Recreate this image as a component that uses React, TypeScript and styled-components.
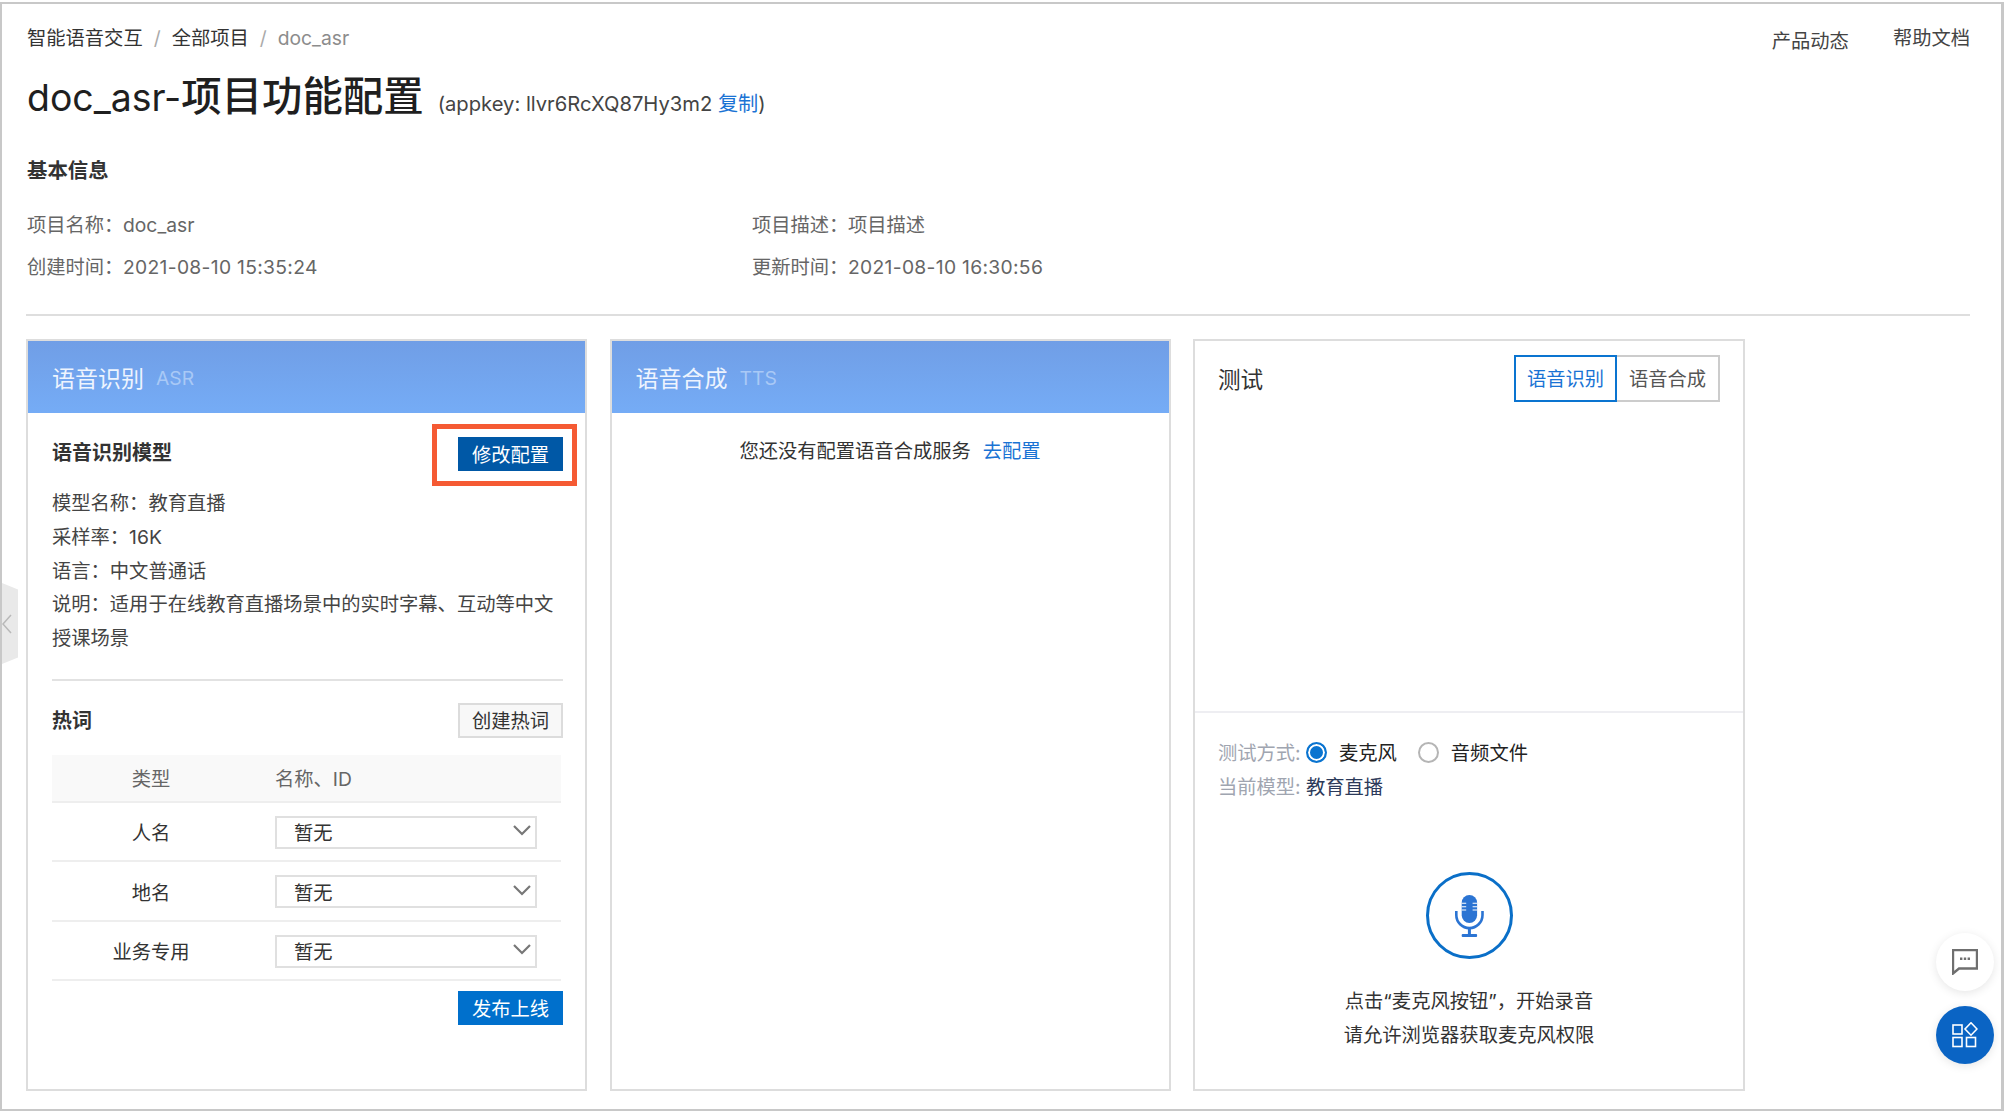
import React from "react";
import styled, { createGlobalStyle } from "styled-components";

const Global = createGlobalStyle`
  html, body { margin: 0; padding: 0; background: #fff; }
  body {
    font-family: "Inter", "Noto Sans CJK SC", sans-serif;
    font-size: 19.3px;
    color: #333;
  }
  * { box-sizing: border-box; }
`;

const Frame = styled.div`
  position: relative;
  width: 2004px;
  height: 1109px;
  margin-top: 2px;
  border: 2px solid #c8c8c8;
  border-right-width: 3px;
  padding: 20px 31px 0 24px;
  overflow: hidden;
`;
const Header = styled.header`
  padding-left: 1px;
`;
const TopRow = styled.div`
  display: flex;
  justify-content: space-between;
  align-items: flex-start;
  height: 28px;
  line-height: 28px;
`;
const Crumbs = styled.div`
  display: flex;
  gap: 11px;
`;
const Crumb = styled.span<{ $muted?: boolean }>`
  color: ${(p) => (p.$muted ? "#8c8c8c" : "#333")};
`;
const Sep = styled.span`
  color: #aaa;
`;
const TopLinks = styled.div`
  display: flex;
  gap: 44px;
`;
const TopLink = styled.span<{ $drop?: number }>`
  color: #444;
  margin-top: ${(p) => p.$drop ?? 0}px;
`;
const TitleRow = styled.div`
  display: flex;
  align-items: baseline;
  margin-top: 17px;
  height: 56px;
  line-height: 56px;
`;
const PageTitle = styled.h1`
  margin: 0;
  font-size: 40.4px;
  font-weight: 500;
  color: #1f1f1f;
`;
const TitleLatin = styled.span`
  font-size: 37.4px;
  font-weight: 400;
`;
const AppKey = styled.span`
  margin-left: 14px;
  font-size: 20.2px;
  color: #444;
`;
const Link = styled.span`
  color: #1a73d4;
`;
const SectionTitle = styled.div`
  margin-top: 32px;
  font-size: 20.4px;
  font-weight: 700;
  line-height: 28px;
  color: #333;
`;
const InfoGrid = styled.div`
  display: grid;
  grid-template-columns: 725px 1fr;
  grid-auto-rows: 42px;
  margin-top: 19px;
  align-items: center;
  color: #666;
  line-height: 26px;
`;
const InfoItem = styled.div`
  display: flex;
  align-items: baseline;
`;
const InfoLabel = styled.span`
  flex: none;
  width: 96px;
  white-space: nowrap;
`;
const DateText = styled.span`
  letter-spacing: 0.3px;
`;
const Divider = styled.div`
  height: 2px;
  margin-top: 26px;
  background: #dedede;
`;
const Panels = styled.div`
  display: flex;
  gap: 22.5px;
  margin-top: 23px;
`;
const Panel = styled.section<{ $w: number }>`
  width: ${(p) => p.$w}px;
  height: 752px;
  border: 2px solid #dddddd;
  display: flex;
  flex-direction: column;
  flex: none;
`;
const PanelHead = styled.div`
  height: 72px;
  padding: 0 24px;
  display: flex;
  align-items: center;
  gap: 12px;
  background: linear-gradient(180deg, #709ee6 0%, #75acf6 100%);
`;
const HeadTitle = styled.span`
  font-size: 23px;
  color: #eef4fe;
`;
const HeadSub = styled.span`
  font-size: 19.3px;
  color: #a9c9f6;
  margin-top: 2px;
`;
const PanelBody = styled.div`
  padding: 0 22px 0 24px;
  display: flex;
  flex-direction: column;
`;
const SplitRow = styled.div<{ $top: number }>`
  display: flex;
  justify-content: space-between;
  align-items: center;
  margin-top: ${(p) => p.$top}px;
`;
const SubTitle = styled.div<{ $lift: number }>`
  font-size: 20px;
  font-weight: 700;
  color: #333;
  margin-bottom: ${(p) => p.$lift}px;
`;
const HighlightWrap = styled.div`
  position: relative;
  display: flex;
`;
const Highlight = styled.div`
  position: absolute;
  left: -26px;
  right: -14px;
  top: -13px;
  bottom: -15px;
  border: 5px solid #f55a33;
`;
const Button = styled.button<{ $variant: "dark" | "primary" | "ghost" }>`
  width: 105px;
  height: ${(p) => (p.$variant === "ghost" ? 35 : 34)}px;
  padding: 0;
  font: inherit;
  border: ${(p) => (p.$variant === "ghost" ? "2px solid #dcdcdc" : "none")};
  background: ${(p) =>
    p.$variant === "dark" ? "#0058a6" : p.$variant === "primary" ? "#0070cc" : "#f8f8f8"};
  color: ${(p) => (p.$variant === "ghost" ? "#333" : "#fff")};
`;
const Lines = styled.div`
  margin-top: 16px;
  line-height: 33.8px;
  color: #444;
`;
const SoftRule = styled.div`
  height: 2px;
  margin-top: 23px;
  background: #e2e2e2;
`;
const HotTable = styled.div`
  margin: 17px 2px 0 0;
`;
const HotHead = styled.div`
  display: grid;
  grid-template-columns: 198px 1fr;
  align-items: center;
  height: 48px;
  padding-top: 1px;
  background: #f9f9f9;
  border-bottom: 2px solid #eeeeee;
  color: #666;
`;
const HotRow = styled.div`
  display: grid;
  grid-template-columns: 198px 1fr;
  align-items: center;
  height: 59.5px;
  padding-top: 1px;
  border-bottom: 2px solid #eeeeee;
  color: #333;
`;
const TypeCell = styled.div`
  text-align: center;
`;
const NameCell = styled.div`
  padding-left: 25px;
`;
const SelectBox = styled.div`
  width: 262px;
  height: 33px;
  border: 2px solid #e0e0e0;
  padding: 0 4px 0 17px;
  display: flex;
  align-items: center;
  justify-content: space-between;
`;
const ChevronBox = styled.span`
  display: flex;
  margin-bottom: 3px;
`;
const Publish = styled.div`
  display: flex;
  justify-content: flex-end;
  margin-top: 10px;
`;
const EmptyNote = styled.div`
  margin-top: 24px;
  height: 28px;
  line-height: 28px;
  display: flex;
  justify-content: center;
  gap: 12px;
  color: #333;
`;
const TestTop = styled.div`
  height: 372px;
  padding: 14px 23px 0 23px;
  display: flex;
  justify-content: space-between;
  align-items: flex-start;
  border-bottom: 2px solid #eeeef2;
`;
const TestTitle = styled.div`
  font-size: 22.6px;
  line-height: 50px;
  color: #333;
`;
const Tabs = styled.div`
  display: flex;
`;
const Tab = styled.div<{ $active?: boolean }>`
  width: 103px;
  height: 47px;
  line-height: 44px;
  text-align: center;
  border: 2px solid ${(p) => (p.$active ? "#0a74d0" : "#cccccc")};
  color: ${(p) => (p.$active ? "#1a73d4" : "#555")};
  & + & {
    border-left: none;
  }
`;
const TestBottom = styled.div`
  padding: 22px 23px 0 23px;
  display: flex;
  flex-direction: column;
`;
const MetaRow = styled.div`
  display: flex;
  align-items: center;
  height: 34px;
`;
const MetaLabel = styled.span`
  width: 82px;
  color: #a0a5b0;
  white-space: nowrap;
`;
const Radio = styled.span<{ $on?: boolean }>`
  width: 21px;
  height: 21px;
  margin: 0 12px 0 ${(p) => (p.$on ? 6 : 21)}px;
  border-radius: 50%;
  border: 2px solid ${(p) => (p.$on ? "#0a74d0" : "#b5b5b5")};
  background: ${(p) => (p.$on ? "#0a74d0" : "#fff")};
  box-shadow: ${(p) => (p.$on ? "inset 0 0 0 2px #fff" : "none")};
`;
const RadioText = styled.span`
  color: #222;
`;
const ModelValue = styled.span`
  color: #2c3a5a;
  margin-left: 6px;
`;
const MicRing = styled.div`
  align-self: center;
  width: 87px;
  height: 87px;
  margin-top: 69px;
  border: 3px solid #0a6fc8;
  border-radius: 50%;
  display: flex;
  align-items: center;
  justify-content: center;
`;
const Hint = styled.div`
  margin-top: 25px;
  line-height: 34px;
  text-align: center;
  color: #333;
`;
const SideHandle = styled.div`
  position: absolute;
  left: 0;
  top: 579px;
  width: 16px;
  height: 81px;
  background: #e9e9e9;
  clip-path: polygon(0 0, 100% 8%, 100% 92%, 0 100%);
  display: flex;
  align-items: center;
`;
const Fab = styled.div<{ $primary?: boolean }>`
  position: absolute;
  right: 7px;
  top: ${(p) => (p.$primary ? 1002 : 929)}px;
  width: 58px;
  height: 58px;
  border-radius: 50%;
  background: ${(p) => (p.$primary ? "#0a64c4" : "#fff")};
  box-shadow: 0 2px 10px rgba(0, 0, 0, 0.1);
  display: flex;
  align-items: center;
  justify-content: center;
`;

const Chevron = () => (
  <svg width="18" height="11" viewBox="0 0 18 11" fill="none" stroke="#777" strokeWidth="2.2">
    <path d="M1 1l8 8 8-8" />
  </svg>
);
const MicIcon = () => (
  <svg width="29" height="42" viewBox="0 0 29 42">
    <rect x="6.7" y="0" width="15.4" height="28" rx="7.7" fill="#2b74d3" />
    <path
      d="M6.7 8.3h4.5M6.7 11.7h4.5M6.7 15h4.5M17.6 8.3h4.5M17.6 11.7h4.5M17.6 15h4.5"
      stroke="#fff"
      strokeWidth="1.1"
    />
    <path d="M1.3 16v4a13.1 13.1 0 0 0 26.2 0v-4" fill="none" stroke="#2b74d3" strokeWidth="2.6" />
    <path d="M14.4 33v6" stroke="#2b74d3" strokeWidth="3" />
    <rect x="6.7" y="39" width="15.4" height="3" rx="1" fill="#2b74d3" />
  </svg>
);
const CommentIcon = () => (
  <svg width="26" height="26" viewBox="0 0 26 26" fill="none">
    <path d="M1 1h24v18.5H7L1 24.5z" stroke="#6f6f6f" strokeWidth="2.4" />
    <path d="M8 8.5h2.4v2.6H8zM11.8 8.5h2.4v2.6h-2.4zM15.6 8.5H18v2.6h-2.4z" fill="#6f6f6f" />
  </svg>
);
const AppsIcon = () => (
  <svg width="26" height="26" viewBox="0 0 26 26" fill="none" stroke="#fff" strokeWidth="1.6">
    <rect x="1" y="3" width="9" height="9" />
    <path d="M19 .8l6 6.2-6 6.2-6-6.2z" />
    <rect x="1" y="15.5" width="9" height="9" />
    <rect x="14.5" y="15.5" width="9" height="9" />
  </svg>
);

const rows = ["人名", "地名", "业务专用"];

export default function App() {
  return (
    <>
      <Global />
      <Frame>
        <Header>
          <TopRow>
            <Crumbs>
              <Crumb>智能语音交互</Crumb>
              <Sep>/</Sep>
              <Crumb>全部项目</Crumb>
              <Sep>/</Sep>
              <Crumb $muted>doc_asr</Crumb>
            </Crumbs>
            <TopLinks>
              <TopLink $drop={3}>产品动态</TopLink>
              <TopLink>帮助文档</TopLink>
            </TopLinks>
          </TopRow>
          <TitleRow>
            <PageTitle>
              <TitleLatin>doc_asr-</TitleLatin>项目功能配置
            </PageTitle>
            <AppKey>
              (appkey: llvr6RcXQ87Hy3m2 <Link>复制</Link>)
            </AppKey>
          </TitleRow>
          <SectionTitle>基本信息</SectionTitle>
          <InfoGrid>
            <InfoItem>
              <InfoLabel>项目名称：</InfoLabel>doc_asr
            </InfoItem>
            <InfoItem>
              <InfoLabel>项目描述：</InfoLabel>项目描述
            </InfoItem>
            <InfoItem>
              <InfoLabel>创建时间：</InfoLabel>
              <DateText>2021-08-10 15:35:24</DateText>
            </InfoItem>
            <InfoItem>
              <InfoLabel>更新时间：</InfoLabel>
              <DateText>2021-08-10 16:30:56</DateText>
            </InfoItem>
          </InfoGrid>
        </Header>
        <Divider />
        <Panels>
          <Panel $w={561}>
            <PanelHead>
              <HeadTitle>语音识别</HeadTitle>
              <HeadSub>ASR</HeadSub>
            </PanelHead>
            <PanelBody>
              <SplitRow $top={24}>
                <SubTitle $lift={5}>语音识别模型</SubTitle>
                <HighlightWrap>
                  <Button $variant="dark">修改配置</Button>
                  <Highlight />
                </HighlightWrap>
              </SplitRow>
              <Lines>
                <div>模型名称：教育直播</div>
                <div>采样率：16K</div>
                <div>语言：中文普通话</div>
                <div>说明：适用于在线教育直播场景中的实时字幕、互动等中文授课场景</div>
              </Lines>
              <SoftRule />
              <SplitRow $top={22}>
                <SubTitle $lift={2}>热词</SubTitle>
                <Button $variant="ghost">创建热词</Button>
              </SplitRow>
              <HotTable>
                <HotHead>
                  <TypeCell>类型</TypeCell>
                  <NameCell>名称、ID</NameCell>
                </HotHead>
                {rows.map((r) => (
                  <HotRow key={r}>
                    <TypeCell>{r}</TypeCell>
                    <NameCell>
                      <SelectBox>
                        暂无
                        <ChevronBox>
                          <Chevron />
                        </ChevronBox>
                      </SelectBox>
                    </NameCell>
                  </HotRow>
                ))}
              </HotTable>
              <Publish>
                <Button $variant="primary">发布上线</Button>
              </Publish>
            </PanelBody>
          </Panel>
          <Panel $w={561}>
            <PanelHead>
              <HeadTitle>语音合成</HeadTitle>
              <HeadSub>TTS</HeadSub>
            </PanelHead>
            <EmptyNote>
              您还没有配置语音合成服务 <Link>去配置</Link>
            </EmptyNote>
          </Panel>
          <Panel $w={552}>
            <TestTop>
              <TestTitle>测试</TestTitle>
              <Tabs>
                <Tab $active>语音识别</Tab>
                <Tab>语音合成</Tab>
              </Tabs>
            </TestTop>
            <TestBottom>
              <MetaRow>
                <MetaLabel>测试方式:</MetaLabel>
                <Radio $on />
                <RadioText>麦克风</RadioText>
                <Radio />
                <RadioText>音频文件</RadioText>
              </MetaRow>
              <MetaRow>
                <MetaLabel>当前模型:</MetaLabel>
                <ModelValue>教育直播</ModelValue>
              </MetaRow>
              <MicRing>
                <MicIcon />
              </MicRing>
              <Hint>
                点击“麦克风按钮”，开始录音
                <br />
                请允许浏览器获取麦克风权限
              </Hint>
            </TestBottom>
          </Panel>
        </Panels>
        <SideHandle>
          <svg width="10" height="20" viewBox="0 0 10 20" fill="none" stroke="#b9b9b9" strokeWidth="1.5">
            <path d="M9 1L1 10l8 9" />
          </svg>
        </SideHandle>
        <Fab>
          <CommentIcon />
        </Fab>
        <Fab $primary>
          <AppsIcon />
        </Fab>
      </Frame>
    </>
  );
}
